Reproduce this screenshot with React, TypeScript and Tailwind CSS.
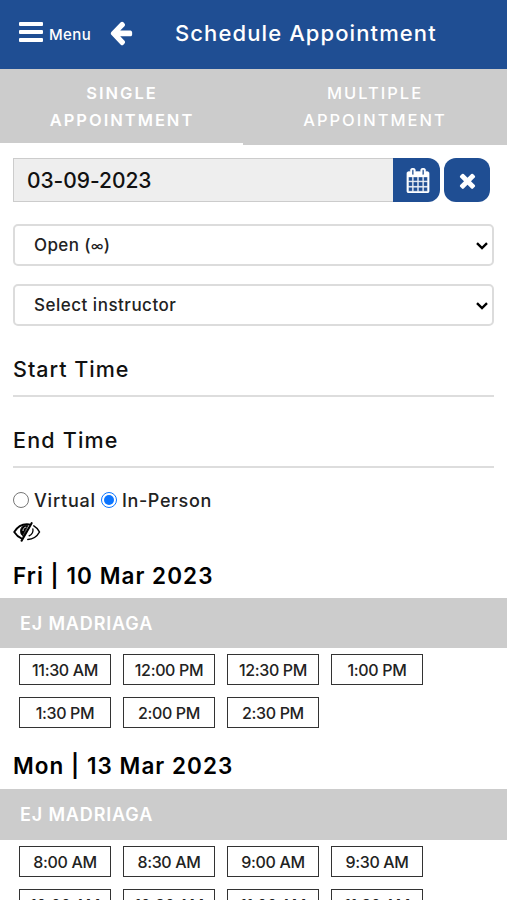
import type { ReactNode } from "react";

function ArrowLeft() {
  return (
    <svg viewBox="0 0 1792 1792" className="h-[27px] w-[26px] fill-white" preserveAspectRatio="none">
      <path d="M1664 896v128q0 53-32.5 90.5t-84.5 37.5h-704l293 294q38 36 38 90t-38 90l-75 76q-37 37-90 37-52 0-91-37l-651-652q-37-37-37-90 0-52 37-91l651-650q38-38 91-38 52 0 90 38l75 74q38 38 38 91t-38 91l-293 293h704q52 0 84.5 37.5t32.5 90.5z" />
    </svg>
  );
}

function Calendar() {
  return (
    <svg viewBox="0 0 1792 1792" className="h-[25px] w-[24px] fill-white stroke-white" strokeWidth="30" preserveAspectRatio="none">
      <path d="M192 1664h288v-288h-288v288zm352 0h320v-288h-320v288zm-352-352h288v-320h-288v320zm352 0h320v-320h-320v320zm-352-384h288v-288h-288v288zm736 736h320v-288h-320v288zm-384-736h320v-288h-320v288zm768 736h288v-288h-288v288zm-384-352h320v-320h-320v320zm-352-864v-288q0-13-9.5-22.5t-22.5-9.5h-64q-13 0-22.5 9.5t-9.5 22.5v288q0 13 9.5 22.5t22.5 9.5h64q13 0 22.5-9.5t9.5-22.5zm736 864h288v-320h-288v320zm-384-384h320v-288h-320v288zm384 0h288v-288h-288v288zm32-480v-288q0-13-9.5-22.5t-22.5-9.5h-64q-13 0-22.5 9.5t-9.5 22.5v288q0 13 9.5 22.5t22.5 9.5h64q13 0 22.5-9.5t9.5-22.5zm384-64v1280q0 52-38 90t-90 38h-1408q-52 0-90-38t-38-90v-1280q0-52 38-90t90-38h128v-96q0-66 47-113t113-47h64q66 0 113 47t47 113v96h384v-96q0-66 47-113t113-47h64q66 0 113 47t47 113v96h128q52 0 90 38t38 90z" />
    </svg>
  );
}

function Times() {
  return (
    <svg viewBox="0 0 1792 1792" className="size-[23px] fill-white">
      <path d="M1490 1322q0 40-28 68l-136 136q-28 28-68 28t-68-28l-294-294-294 294q-28 28-68 28t-68-28l-136-136q-28-28-28-68t28-68l294-294-294-294q-28-28-28-68t28-68l136-136q28-28 68-28t68 28l294 294 294-294q28-28 68-28t68 28l136 136q28 28 28 68t-28 68l-294 294 294 294q28 28 28 68z" />
    </svg>
  );
}

function EyeSlash() {
  return (
    <svg viewBox="0 0 28 20" className="h-[20px] w-[28px]" fill="none" stroke="#000" strokeLinecap="round">
      <path d="M16.2 2.4C9.5 1.5 4.5 4.6 1.2 10c1.9 3 4.2 5.1 7.2 6.3" strokeWidth="1.8" />
      <path d="M14.7 3.2C10 2.7 7.4 5.8 7.5 9.3c.1 2 .8 3.7 2.3 4.8z" fill="#000" strokeWidth="0.8" />
      <path d="M10 8.6c.1-1.8 1-3 2.5-3.4" stroke="#fff" strokeWidth="0.9" />
      <path d="M18.6 1.2 8.6 18.7" strokeWidth="2.1" />
      <path d="M20.8 3.9c2.6 1.4 4.3 3.5 5.7 6.1-2.7 4.8-6.7 7.3-11.7 7.4" strokeWidth="1.5" />
      <path d="M19.9 6.8c.5 3-.8 5.6-3.8 7" strokeWidth="1.3" />
    </svg>
  );
}

function SelectBox({ children }: { children: ReactNode }) {
  return (
    <button className="flex h-[42px] w-full items-center justify-between rounded-[5px] border-2 border-[#dcdcdc] bg-white pt-[2px] pr-[4px] pl-[19px] text-left text-[17px] font-medium text-[#222]">
      <span>{children}</span>
      <svg viewBox="0 0 12 8" className="h-[8px] w-[12px]" fill="none" stroke="#000" strokeWidth="2.4">
        <path d="M1 1.2 6 6l5-4.8" />
      </svg>
    </button>
  );
}

function Slots({ times }: { times: string[] }) {
  return (
    <div className="grid grid-cols-[repeat(4,92px)] gap-x-3 gap-y-3 pl-[19px]">
      {times.map((t) => (
        <button
          key={t}
          className="flex h-[31px] items-center justify-center border-[1.5px] border-[#333] bg-white text-[16px] font-medium tracking-[-0.35px] whitespace-nowrap text-[#222]"
        >
          {t}
        </button>
      ))}
    </div>
  );
}

export default function App() {
  return (
    <div className="h-[900px] w-[507px] overflow-hidden bg-white font-['Inter',sans-serif] text-[#111]">
      <header className="flex h-[69px] items-center bg-[#1f4e93] pl-[19px] text-white">
        <div className="flex w-[24px] flex-col gap-[4px] pb-[5px]">
          <span className="h-[4px] rounded-[1px] bg-white" />
          <span className="h-[4px] rounded-[1px] bg-white" />
          <span className="h-[4px] rounded-[1px] bg-white" />
        </div>
        <span className="w-[61px] pt-[2px] pl-[6px] text-[15px] font-medium tracking-[0.4px]">Menu</span>
        <span className="w-[71px] pb-[5px] pl-[4px]"><ArrowLeft /></span>
        <h1 className="pb-[3px] text-[22px] font-medium tracking-[1.1px] whitespace-nowrap">Schedule Appointment</h1>
      </header>

      <nav className="grid h-[76px] grid-cols-[243px_264px] text-center text-[16.5px] leading-[27px] text-white">
        <div className="h-[74px] bg-[#ccc] pt-[11px] pl-[1px] font-semibold tracking-[2px]">SINGLE<br />APPOINTMENT</div>
        <div className="bg-[#ccc] pt-[11px] font-medium tracking-[2px]">MULTIPLE<br />APPOINTMENT</div>
      </nav>

      <section className="px-[13px] pt-[13px]">
        <div className="flex h-[44px]">
          <div className="flex w-[380px] items-center border border-r-0 border-[#ccc] bg-[#eee] pt-[2px] pl-[13px] text-[21px] font-medium tracking-[-0.05px]">03-09-2023</div>
          <button className="flex w-[47px] items-center justify-center rounded-r-[12px] bg-[#1f4e93] pl-[2px]"><Calendar /></button>
          <button className="ml-[4px] flex w-[46px] items-center justify-center rounded-[12px] bg-[#1f4e93]"><Times /></button>
        </div>
        <div className="mt-[22px] flex flex-col gap-[18px]">
          <SelectBox><span className="tracking-[0.4px]">Open (<span className="text-[13px]">∞</span>)</span></SelectBox>
          <SelectBox><span className="tracking-[0.5px]">Select instructor</span></SelectBox>
        </div>
        <div className="mt-[18px] flex h-[53px] items-center border-b-2 border-[#ddd] text-[21.5px] font-medium tracking-[1px]">Start Time</div>
        <div className="mt-[18px] flex h-[53px] items-center border-b-2 border-[#ddd] text-[21.5px] font-medium tracking-[1.2px]">End Time</div>
        <div className="mt-[18px] flex h-[28px] items-center text-[18px] font-medium text-[#222]">
          <span className="size-[16px] rounded-full border border-[#777]" />
          <span className="w-[72px] pl-[5px] tracking-[0.8px]">Virtual</span>
          <span className="flex size-[16px] items-center justify-center rounded-full border-[1.5px] border-[#0b75ff]">
            <span className="size-[10px] rounded-full bg-[#0b75ff]" />
          </span>
          <span className="pl-[5px] tracking-[0.6px]">In-Person</span>
        </div>
        <div className="mt-[7px] h-[22px] pt-[1px]"><EyeSlash /></div>
      </section>

      <h2 className="flex h-[55px] items-center px-[13px] pt-[10px] text-[22.5px] font-semibold tracking-[1.05px] text-black">Fri | 10 Mar 2023</h2>
      <div className="mb-[6px] flex h-[50px] items-center bg-[#ccc] pl-[20px] text-[18px] font-semibold tracking-[0.85px] text-white">EJ MADRIAGA</div>
      <Slots times={["11:30 AM", "12:00 PM", "12:30 PM", "1:00 PM", "1:30 PM", "2:00 PM", "2:30 PM"]} />
      <h2 className="flex h-[61px] items-center px-[13px] pt-[14px] text-[22.5px] font-semibold tracking-[1.05px] text-black">Mon | 13 Mar 2023</h2>
      <div className="mb-[6px] flex h-[51px] items-center bg-[#ccc] pl-[20px] text-[18px] font-semibold tracking-[0.85px] text-white">EJ MADRIAGA</div>
      <Slots times={["8:00 AM", "8:30 AM", "9:00 AM", "9:30 AM", "10:00 AM", "10:30 AM", "11:00 AM", "11:30 AM"]} />
    </div>
  );
}
